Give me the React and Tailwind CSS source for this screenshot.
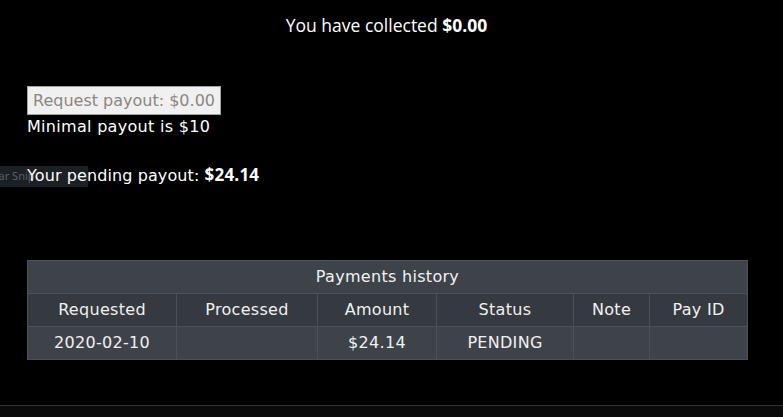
export default function App() {
  const cols = [
    { label: "Requested", w: "w-[149px]" },
    { label: "Processed", w: "w-[141px]" },
    { label: "Amount", w: "w-[119px]" },
    { label: "Status", w: "w-[137px]" },
    { label: "Note", w: "w-[76px]" },
    { label: "Pay ID", w: "w-[98px]" },
  ];
  const row = ["2020-02-10", "", "$24.14", "PENDING", "", ""];
  const body = { fontFamily: '"DejaVu Sans", "Noto Sans", sans-serif', letterSpacing: "0.3px" };
  const num = { fontFamily: '"Open Sans", sans-serif', letterSpacing: "0.2px" };

  return (
    <div className="relative w-[783px] h-[417px] bg-black text-white overflow-hidden flex flex-col">
      {/* clipped toolbar label sitting under the page text */}
      <div className="absolute left-0 top-[166px] w-[88px] h-[21px] bg-[#1b2025] overflow-hidden">
        <span
          className="absolute left-[-17px] top-[3px] text-[11px] leading-[14px] text-[#5a5f66] whitespace-nowrap"
          style={{ fontFamily: '"Noto Sans", sans-serif' }}
        >
          Solar Snip
        </span>
      </div>

      <div className="pt-[13px] pr-[10px] text-center text-[17.5px] leading-[24px]" style={{ fontFamily: '"Open Sans", sans-serif' }}>
        You have collected <b className="font-bold">$0.00</b>
      </div>

      <div className="relative pl-[27px] pt-[49px] text-[16px]" style={body}>
        <button
          disabled
          className="h-[29px] w-[194px] bg-[#f0f0f0] border border-[#a3a3a3] text-[#8a8682] text-[16px] leading-[27px] text-center whitespace-nowrap"
          style={{ fontFamily: '"DejaVu Sans", sans-serif', letterSpacing: "0px" }}
        >
          Request payout: $0.00
        </button>
        <div className="leading-[22px] mt-[1px]">Minimal payout is $10</div>
        <div className="h-[22px] leading-[22px] mt-[26px]">
          <span style={{ letterSpacing: "0.1px" }}>Your pending payout: </span>
          <b className="font-bold text-[17px]" style={num}>$24.14</b>
        </div>
      </div>

      <div className="pl-[27px] mt-[74px]" style={body}>
        <table className="border-collapse text-[16px] text-[#f1f1f1]">
          <thead>
            <tr className="bg-[#3e434a]">
              <th colSpan={6} className="h-[33px] font-normal text-center border border-[#4b5158]">
                Payments history
              </th>
            </tr>
            <tr className="bg-[#343a40]">
              {cols.map((c) => (
                <th key={c.label} className={`${c.w} h-[33px] font-normal text-center border border-[#4b5158]`}>
                  {c.label}
                </th>
              ))}
            </tr>
          </thead>
          <tbody>
            <tr className="bg-[#3e434a]">
              {row.map((v, i) => (
                <td key={i} className="h-[33px] text-center border border-[#4b5158]">
                  {v}
                </td>
              ))}
            </tr>
          </tbody>
        </table>
      </div>

      <div className="mt-auto h-[12px] border-t border-[#333333] bg-[#0a0a0a]" />
    </div>
  );
}
